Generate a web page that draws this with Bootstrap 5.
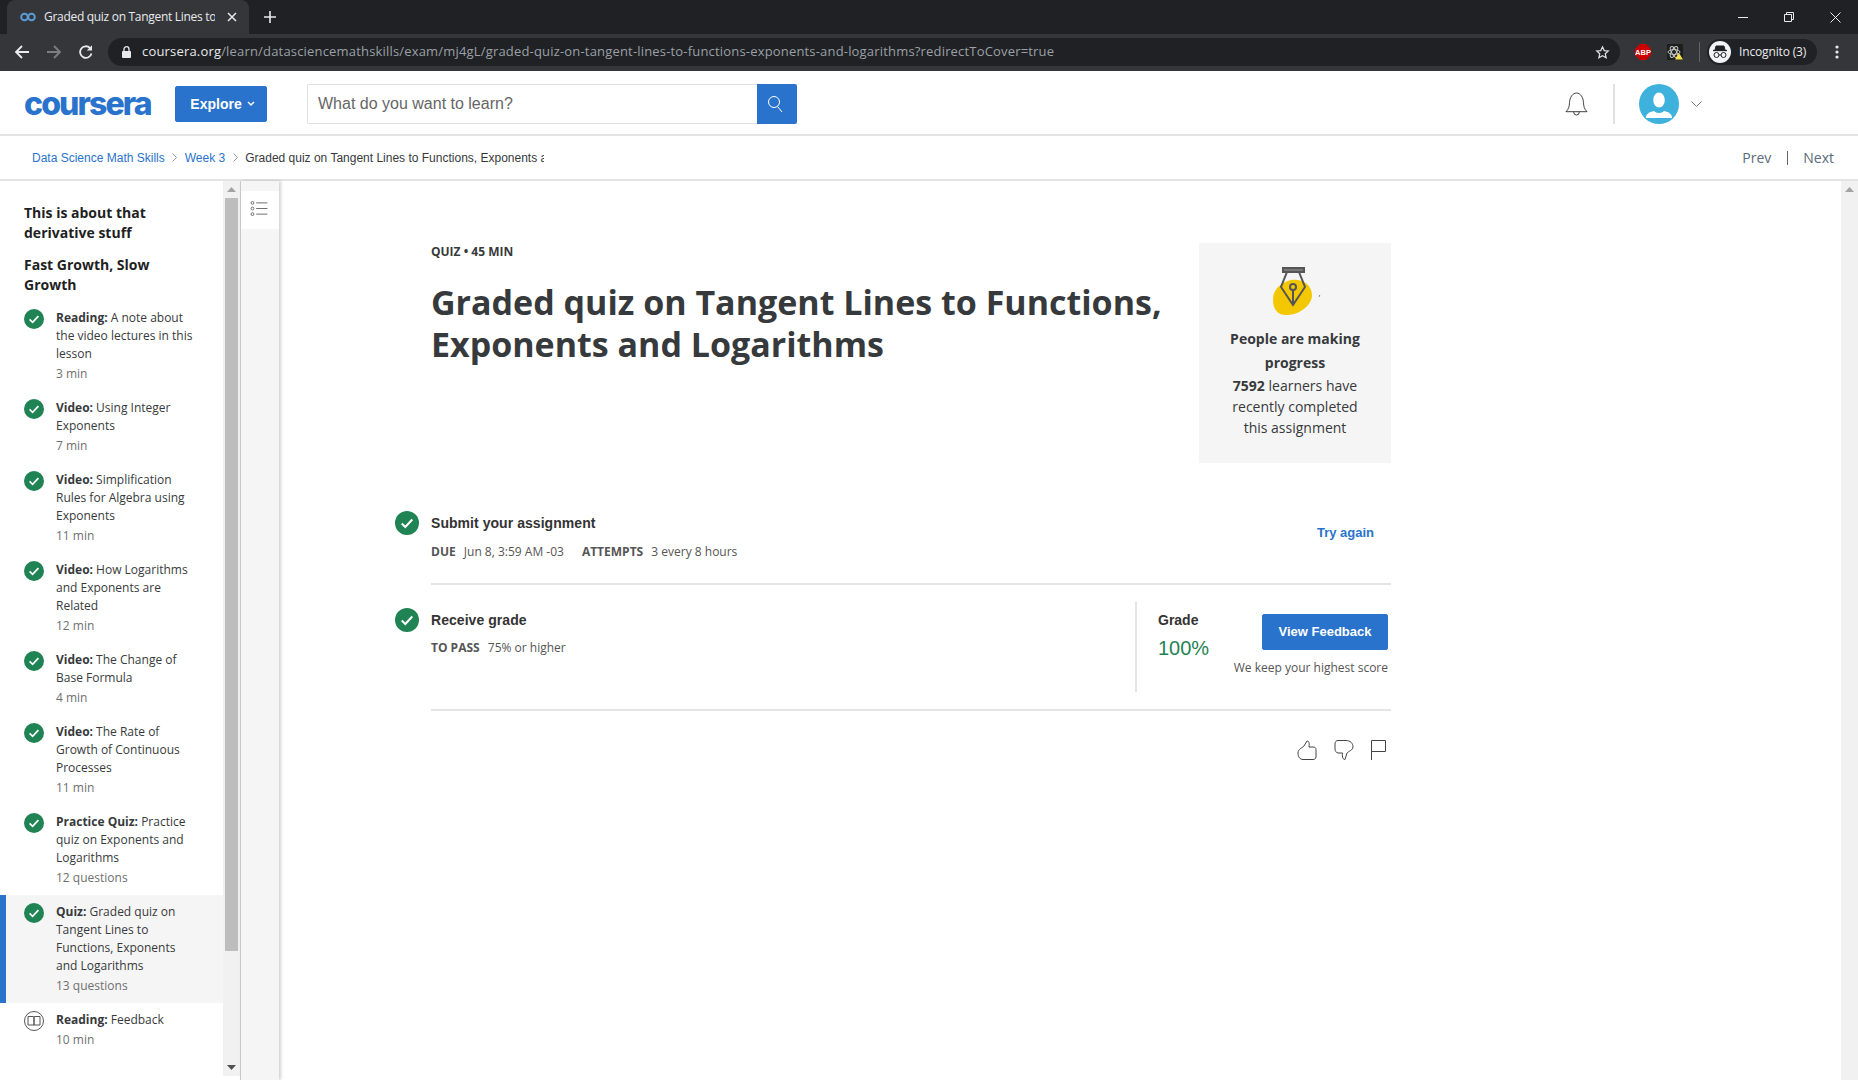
<!doctype html>
<html lang="en">
<head>
<meta charset="utf-8">
<title>Graded quiz on Tangent Lines to Functions</title>
<link href="https://cdn.jsdelivr.net/npm/bootstrap@5.3.0/dist/css/bootstrap.min.css" rel="stylesheet">
<style>
html,body{height:1080px;overflow:hidden;background:#fff}
body{font-family:"Open Sans",sans-serif;color:#373a3c;font-size:14px}
/* browser chrome */
.tabstrip{height:34px;background:#202124;color:#e8eaed}
.tabshape{width:242px;margin-left:7px;height:34px;background:#35363a;border-radius:8px 8px 0 0;padding:0 12px 0 13px;font-size:12px;gap:8px}
.tabtitle{width:171px;overflow:hidden;white-space:nowrap;letter-spacing:-.3px}
.newtab{margin-left:14px}
.winctrl{margin-left:auto;gap:36px;padding-right:17px}
.toolbar{height:37px;background:#35363a;padding:4px 0 5px 14px;color:#e8eaed}
.navico{gap:16px;width:94px}
.omni{height:28px;width:1512px;background:#202124;border-radius:14px;padding:0 10px 0 14px;font-size:13px;gap:11px}
.omni-url{color:#9aa0a6;white-space:nowrap;letter-spacing:.18px;flex:1}
.omni-url b{font-weight:400;color:#e8eaed}
.ext-row{margin-left:15px;gap:16px}
.divv{width:1px;height:20px;background:#5f6368}
.incog{width:110px;height:26px;border-radius:13px;background:#202124;padding-left:2px;gap:8px;font-size:12px;margin-left:-9px;letter-spacing:-.15px}
.incog-face{width:22px;height:22px;background:#f1f3f4;border-radius:50%}
.menudots{margin-left:2px}
/* site header */
.sitehead{height:65px;border-bottom:2px solid #e4e4e4;padding:3px 0 0 24px}
.wordmark{width:127px;font-family:Inter,sans-serif;font-weight:800;font-size:32px;line-height:36px;color:#2a73cc;letter-spacing:-1.9px;margin-right:24px;white-space:nowrap}
.btn-explore{--bs-btn-bg:#2a73cc;--bs-btn-border-color:#2a73cc;--bs-btn-hover-bg:#2a73cc;--bs-btn-color:#fff;--bs-btn-border-radius:2px;width:92px;height:36px;font-family:"Liberation Sans",sans-serif;font-weight:700;font-size:14px;padding:0 0 0 3px;gap:5px}
.searchgrp{width:490px;height:40px;margin-left:40px}
.searchgrp .form-control{border:1px solid #e1e1e1;border-right:0;border-radius:2px 0 0 2px;font-family:"Liberation Sans",sans-serif;font-size:16px;padding:0 10px;color:#333}
.searchgrp .form-control::placeholder{color:#666}
.searchbtn{width:40px;background:#2a73cc;border-radius:0 2px 2px 0;padding:0 4px 0 0}
.head-right{margin-left:auto;padding-right:156px}
.head-sep{width:2px;height:40px;background:#e1e1e1;margin:0 24px 0 25px}
.avatar{width:40px;height:40px;border-radius:50%;background:#3eb1dd}
.avatar-caret{margin-left:12px}
/* breadcrumb */
.crumbbar{height:45px;border-bottom:2px solid #e4e4e4;padding:0 24px 0 32px;font-family:"Liberation Sans",sans-serif;font-size:12px}
.crumbbar .breadcrumb{--bs-breadcrumb-margin-bottom:0;--bs-breadcrumb-item-padding-x:0;flex-wrap:nowrap}
.crumbbar a{color:#2a73cc;text-decoration:none}
.crumb-cur{width:299px;overflow:hidden;white-space:nowrap;color:#373a3c}
.crumb-sep{margin:0 7.5px;display:flex;align-items:center}
.prevnext{font-family:"Open Sans",sans-serif;font-size:14px;color:#5b6b7b;gap:15px}
.prevnext span:first-child{margin-right:1px}
.prevnext i{display:block;width:1px;height:14px;background:#666}
/* body */
.workspace{height:899px}
.sidebar{width:223px;height:899px;overflow:hidden;padding-top:22px}
.side-head{font-weight:700;font-size:14px;line-height:20px;color:#1f1f1f;padding:0 30px 0 24px;margin-bottom:12px}
.side-head.last{margin-bottom:6px}
.side-item{display:flex;padding:8px 28px 8px 24px;font-size:12px;line-height:18px}
.side-item.active-it{background:#f5f5f5;border-left:6px solid #2a73cc;padding-left:18px}
.side-item svg{flex:none;margin-right:12px}
.side-time{color:#6f6f6f;margin-top:2px}
.side-item b{font-weight:700}
.fakebar{width:17px;background:#f1f1f1;height:895px;display:flex;flex-direction:column;align-items:center}
.fakebar-arrow{height:17px;display:flex;align-items:center;justify-content:center;flex:none}
.fakebar-thumb{width:13px;height:753px;background:#bdbdbd;flex:none}
.rail{width:39px;background:#f5f5f5;border-left:1px solid #c8c8c8;box-shadow:2px 0 3px rgba(0,0,0,.18);padding-top:10px;flex:none}
.rail-tile{height:38px;background:#fff;padding:0 3px 4px 0}
.mainpane{flex:1;padding:61px 0 0 152px;min-width:0}
.mainbox{width:960px}
.eyebrow{font-size:12px;font-weight:700;line-height:20px;margin-bottom:19px}
.quiztitle{font-size:34px;font-weight:700;line-height:42px;margin:0;color:#373a3c;width:745px}
.progress-panel{width:192px;height:220px;background:#f5f5f5;text-align:center;padding-top:24px;margin-top:1px}
.panel-head{font-weight:700;line-height:24px;font-size:14px;margin-top:10px;padding:0 10px}
.panel-body{line-height:21px;padding:0 20px}
.steps{margin-top:20px}
.step-row{display:flex;border-bottom:2px solid #e4e4e4}
.step-ico{flex:none;width:24px;height:24px;margin-left:-36px;margin-right:12px}
.step-title{font-family:"Liberation Sans",sans-serif;font-weight:700;font-size:14px;letter-spacing:.05px;line-height:20px;color:#333}
.step-meta{font-size:12px;line-height:18px;color:#555;margin-top:10px;gap:18px}
.step-meta b{font-weight:700;margin-right:5px}
.step-one{height:102px;padding-top:30px}
.step-one .step-ico{margin-top:-2px}
.step-two{height:126px;padding-top:17px}
.step-two .step-ico{margin-top:6px}
.step-two .textcol{padding-top:8px}
.step-two .step-meta{margin-top:9px}
.tryagain{margin-left:auto;font-family:"Liberation Sans",sans-serif;font-weight:700;font-size:13px;color:#2a73cc;text-decoration:none;line-height:20px;margin-right:17px;align-self:flex-start;padding-top:10px;box-sizing:content-box}
.gradecol{margin-left:auto;width:256px;height:90px;border-left:2px solid #e4e4e4;padding-left:21px;display:flex;justify-content:space-between;padding-right:3px}
.grade-k{font-family:"Liberation Sans",sans-serif;font-weight:700;font-size:14px;line-height:20px;color:#333;margin-top:8px}
.grade-v{font-family:"Liberation Sans",sans-serif;font-size:20px;line-height:28px;color:#1f8354;margin-top:4px}
.btn-fb{--bs-btn-bg:#2a73cc;--bs-btn-border-color:#2a73cc;--bs-btn-hover-bg:#2a73cc;--bs-btn-color:#fff;--bs-btn-border-radius:2px;width:126px;height:36px;padding:0;font-family:"Liberation Sans",sans-serif;font-weight:700;font-size:13px;display:block;margin:12px 0 0 auto}
.score-note{font-size:12px;line-height:18px;color:#555;margin-top:9px;text-align:right;white-space:nowrap}
.feedback{gap:17px;justify-content:flex-end;padding:29px 5px 0 0}
.fakebar-main{height:899px}
</style>
</head>
<body>
<svg width="0" height="0" class="d-block" aria-hidden="true">
<symbol id="okc" viewBox="0 0 20 20"><circle cx="10" cy="10" r="10" fill="#1f8354"/><path d="M5.6 10.4l3 2.9 5.800-6.200" fill="none" stroke="#fff" stroke-width="1.7"/></symbol>
</svg>

<div class="tabstrip d-flex align-items-end">
  <div class="tabshape d-flex align-items-center">
    <svg width="16" height="10" viewBox="0 0 16 10" fill="none" stroke="#5b9bd5" stroke-width="2"><circle cx="4.5" cy="5" r="3.3"/><circle cx="11.5" cy="5" r="3.3"/></svg>
    <div class="tabtitle">Graded quiz on Tangent Lines to</div>
    <svg width="10" height="10" viewBox="0 0 10 10" stroke="#e8eaed" stroke-width="1.5" class="ms-auto"><path d="M1 1l8 8M9 1l-8 8"/></svg>
  </div>
  <svg class="newtab align-self-center" width="14" height="14" viewBox="0 0 14 14" stroke="#e8eaed" stroke-width="1.6"><path d="M7 1v12M1 7h12"/></svg>
  <div class="winctrl d-flex align-items-center align-self-center">
    <svg width="10" height="10" viewBox="0 0 10 10" stroke="#e8eaed"><path d="M0 5.5h10"/></svg>
    <svg width="10" height="10" viewBox="0 0 10 10" fill="none" stroke="#e8eaed"><path d="M.5 2.5h7v7h-7zM2.5 2.5V.5h7v7h-2"/></svg>
    <svg width="11" height="11" viewBox="0 0 11 11" stroke="#e8eaed"><path d="M.5.5l10 10M10.500.5l-10 10"/></svg>
  </div>
</div>

<div class="toolbar d-flex align-items-center">
  <div class="navico d-flex align-items-center">
    <svg width="16" height="16" viewBox="0 0 16 16" fill="none" stroke="#e8eaed" stroke-width="1.8"><path d="M15 8H2M8 2L2 8l6 6"/></svg>
    <svg width="16" height="16" viewBox="0 0 16 16" fill="none" stroke="#7b7e83" stroke-width="1.8"><path d="M1 8h13M8 2l6 6-6 6"/></svg>
    <svg width="16" height="16" viewBox="0 0 16 16" fill="none" stroke="#e8eaed" stroke-width="1.8"><path d="M13.500 9.500A5.800 5.800 0 1 1 12 4"/><path d="M14 1.200v5.200H8.800z" fill="#e8eaed" stroke="none"/></svg>
  </div>
  <div class="omni d-flex align-items-center">
    <svg width="9" height="12" viewBox="0 0 9 12"><rect y="5" width="9" height="7" rx="1" fill="#e8eaed"/><path d="M2 5V3.200a2.500 2.500 0 0 1 5 0V5" fill="none" stroke="#e8eaed" stroke-width="1.300"/></svg>
    <div class="omni-url"><b>coursera.org</b>/learn/datasciencemathskills/exam/mj4gL/graded-quiz-on-tangent-lines-to-functions-exponents-and-logarithms?redirectToCover=true</div>
    <svg width="15" height="15" viewBox="0 0 24 24" fill="none" stroke="#dadce0" stroke-width="2"><path d="M12 3l2.800 6 6.400.7-4.800 4.300 1.400 6.500L12 17.200 6.200 20.500 7.600 14 2.800 9.700l6.400-.7z"/></svg>
  </div>
  <div class="ext-row d-flex align-items-center">
    <svg width="16" height="16" viewBox="0 0 16 16"><path d="M5 0h6l5 5v6l-5 5H5l-5-5V5z" fill="#c00"/><text x="8" y="11" text-anchor="middle" font-family="Liberation Sans" font-weight="700" font-size="7.500" fill="#fff">ABP</text></svg>
    <svg width="16" height="16" viewBox="0 0 16 16" fill="none"><rect width="16" height="16" fill="#1e1e1e"/><g stroke="#c8c8c8"><ellipse cx="7" cy="8" rx="6" ry="2.400"/><ellipse cx="7" cy="8" rx="6" ry="2.400" transform="rotate(60 7 8)"/><ellipse cx="7" cy="8" rx="6" ry="2.400" transform="rotate(120 7 8)"/></g><path d="M12 9l4 6.500H8z" fill="#f4e04d"/></svg>
    <span class="divv"></span>
    <div class="incog d-flex align-items-center">
      <span class="incog-face d-flex align-items-center justify-content-center">
        <svg width="16" height="14" viewBox="0 0 16 14" fill="none" stroke="#202124"><path d="M4 1h8l1 4H3z" fill="#202124"/><path d="M1 5.500h14" stroke-width="1.300"/><circle cx="4.500" cy="10" r="2.500"/><circle cx="11.500" cy="10" r="2.500"/><path d="M7 10h2"/></svg>
      </span>
      <span>Incognito (3)</span>
    </div>
    <svg class="menudots" width="4" height="14" viewBox="0 0 4 14" fill="#e8eaed"><circle cx="2" cy="2" r="1.600"/><circle cx="2" cy="7" r="1.600"/><circle cx="2" cy="12" r="1.600"/></svg>
  </div>
</div>

<header class="sitehead d-flex align-items-center bg-white">
  <div class="wordmark">coursera</div>
  <button class="btn btn-explore d-flex align-items-center justify-content-center" type="button">Explore
    <svg width="8" height="6" viewBox="0 0 8 6" fill="none" stroke="#fff" stroke-width="1.500"><path d="M1 1l3 3 3-3"/></svg>
  </button>
  <div class="input-group searchgrp flex-nowrap">
    <input class="form-control" type="text" placeholder="What do you want to learn?" aria-label="Search">
    <button class="btn searchbtn d-flex align-items-center justify-content-center" type="button" aria-label="Search">
      <svg width="16" height="18" viewBox="0 0 16 18" fill="none" stroke="#fff"><circle cx="7" cy="7" r="5.500"/><path d="M10.500 11.500L15 17"/></svg>
    </button>
  </div>
  <div class="head-right d-flex align-items-center ms-auto">
    <svg width="23" height="25" viewBox="0 0 24 26" fill="none" stroke="#3a3a3a"><path d="M1 20.500h22c-3-3-3.500-5.500-3.700-9.500C19 5.500 16 1 12 1S5 5.500 4.700 11C4.500 15 4 17.500 1 20.500z"/><path d="M9 20.500a3 3.500 0 0 0 6 0"/></svg>
    <span class="head-sep"></span>
    <div class="avatar d-flex align-items-end justify-content-center overflow-hidden">
      <svg width="26" height="33" viewBox="0 0 26 33" fill="#fff"><ellipse cx="13" cy="9" rx="5.800" ry="7.500"/><path d="M0 27c0-4 3-6 8-7 1 1 3 2 5 2s4-1 5-2c5 1 8 3 8 7z"/></svg>
    </div>
    <svg class="avatar-caret" width="11" height="6" viewBox="0 0 11 6" fill="none" stroke="#777"><path d="M.5.500l5 5 5-5"/></svg>
  </div>
</header>

<div class="crumbbar d-flex align-items-center justify-content-between bg-white">
  <nav aria-label="breadcrumb">
    <ol class="breadcrumb align-items-center">
      <li><a href="#">Data Science Math Skills</a></li>
      <li class="crumb-sep"><svg width="5" height="9" viewBox="0 0 5 9" fill="none" stroke="#999"><path d="M.5.500l4 4-4 4"/></svg></li>
      <li><a href="#">Week 3</a></li>
      <li class="crumb-sep"><svg width="5" height="9" viewBox="0 0 5 9" fill="none" stroke="#999"><path d="M.5.500l4 4-4 4"/></svg></li>
      <li class="crumb-cur">Graded quiz on Tangent Lines to Functions, Exponents and Logarithms</li>
    </ol>
  </nav>
  <div class="prevnext d-flex align-items-center"><span>Prev</span><i></i><span>Next</span></div>
</div>

<div class="workspace d-flex">
  <aside class="sidebar flex-none">
    <div class="side-head">This is about that derivative stuff</div>
    <div class="side-head last">Fast Growth, Slow Growth</div>
    <div class="side-item"><svg width="20" height="20"><use href="#okc"/></svg><div><div><b>Reading:</b> A note about the video lectures in this lesson</div><div class="side-time">3 min</div></div></div>
    <div class="side-item"><svg width="20" height="20"><use href="#okc"/></svg><div><div><b>Video:</b> Using Integer Exponents</div><div class="side-time">7 min</div></div></div>
    <div class="side-item"><svg width="20" height="20"><use href="#okc"/></svg><div><div><b>Video:</b> Simplification Rules for Algebra using Exponents</div><div class="side-time">11 min</div></div></div>
    <div class="side-item"><svg width="20" height="20"><use href="#okc"/></svg><div><div><b>Video:</b> How Logarithms and Exponents are Related</div><div class="side-time">12 min</div></div></div>
    <div class="side-item"><svg width="20" height="20"><use href="#okc"/></svg><div><div><b>Video:</b> The Change of Base Formula</div><div class="side-time">4 min</div></div></div>
    <div class="side-item"><svg width="20" height="20"><use href="#okc"/></svg><div><div><b>Video:</b> The Rate of Growth of Continuous Processes</div><div class="side-time">11 min</div></div></div>
    <div class="side-item"><svg width="20" height="20"><use href="#okc"/></svg><div><div><b>Practice Quiz:</b> Practice quiz on Exponents and Logarithms</div><div class="side-time">12 questions</div></div></div>
    <div class="side-item active-it"><svg width="20" height="20"><use href="#okc"/></svg><div><div><b>Quiz:</b> Graded quiz on Tangent Lines to Functions, Exponents and Logarithms</div><div class="side-time">13 questions</div></div></div>
    <div class="side-item"><svg width="20" height="20" viewBox="0 0 20 20" fill="none" stroke="#555"><circle cx="10" cy="10" r="9.500"/><path d="M4 5.500h5.500a.5.500 0 0 1 .5.500v8H4zM16 5.500h-5.500a.5.500 0 0 0-.5.500v8h6z"/></svg><div><div><b>Reading:</b> Feedback</div><div class="side-time">10 min</div></div></div>
  </aside>
  <div class="fakebar flex-none">
    <div class="fakebar-arrow"><svg width="9" height="5" viewBox="0 0 9 5" fill="#a3a3a3"><path d="M4.500 0L9 5H0z"/></svg></div>
    <div class="fakebar-thumb"></div>
    <div class="fakebar-arrow mt-auto"><svg width="9" height="5" viewBox="0 0 9 5" fill="#505050"><path d="M4.500 5L9 0H0z"/></svg></div>
  </div>
  <div class="rail"><div class="rail-tile d-flex align-items-center justify-content-center">
    <svg width="18" height="15" viewBox="0 0 18 16" fill="none" stroke="#666"><circle cx="2" cy="2" r="1.500"/><circle cx="2" cy="8" r="1.500"/><circle cx="2" cy="14" r="1.500"/><path d="M6 2h12M6 8h12M6 14h12"/></svg>
  </div></div>

  <main class="mainpane">
    <div class="mainbox">
      <div class="d-flex justify-content-between align-items-start">
        <div>
          <div class="eyebrow">QUIZ &bull; 45 MIN</div>
          <h1 class="quiztitle">Graded quiz on Tangent Lines to Functions, Exponents and Logarithms</h1>
        </div>
        <section class="progress-panel">
          <svg width="64" height="50" viewBox="0 0 64 50" class="d-block mx-auto"><path d="M10 32c0-10 9-17 18-19 11-2 21 5 21 15 0 10-12 20-26 20-9 0-13-6-13-16z" fill="#f4c800"/><g fill="none" stroke="#555" stroke-width="2"><path d="M20 1h21v4H20z" fill="#777"/><path d="M24 5l-6 15 12 18 12-18-6-15"/><circle cx="30" cy="20" r="3"/><path d="M30 23v15"/></g><path d="M56 28l.8.8-.8 1" fill="none" stroke="#777"/></svg>
          <div class="panel-head">People are making progress</div>
          <div class="panel-body"><b>7592</b> learners have recently completed this assignment</div>
        </section>
      </div>
      <div class="steps">
        <div class="step-row step-one">
          <svg class="step-ico" viewBox="0 0 20 20"><use href="#okc"/></svg>
          <div class="textcol">
            <div class="step-title">Submit your assignment</div>
            <div class="step-meta d-flex"><span><b>DUE</b> Jun 8, 3:59 AM -03</span><span><b>ATTEMPTS</b> 3 every 8 hours</span></div>
          </div>
          <a href="#" class="tryagain">Try again</a>
        </div>
        <div class="step-row step-two">
          <svg class="step-ico" viewBox="0 0 20 20"><use href="#okc"/></svg>
          <div class="textcol">
            <div class="step-title">Receive grade</div>
            <div class="step-meta d-flex"><span><b>TO PASS</b> 75% or higher</span></div>
          </div>
          <div class="gradecol">
            <div><div class="grade-k">Grade</div><div class="grade-v">100%</div></div>
            <div><button type="button" class="btn btn-fb">View Feedback</button><div class="score-note">We keep your highest score</div></div>
          </div>
        </div>
        <div class="feedback d-flex">
          <svg width="20" height="20" viewBox="0 0 20 20" fill="none" stroke="#444"><path d="M1 13C1 9 5 8 7 6l3-5c2 0 2.500 2 2 6h4c3 0 3 2 3 3v7c0 2-2 2.500-3 2.500H6C3 19.500 1 17 1 13z"/></svg>
          <svg width="20" height="20" viewBox="0 0 20 20" fill="none" stroke="#444"><path d="M4 .5h8c4 0 7 2.500 7 6.500 0 3-4 4-6 6l-2 6.500c-2 0-3-2-2.500-6.500H4C2 12.500 1 11 1 9V4C1 2 2 .5 4 .5z"/></svg>
          <svg width="15" height="20" viewBox="0 0 15 20" fill="none" stroke="#444"><path d="M.5 20V.5h14v11H.5"/></svg>
        </div>
      </div>
    </div>
  </main>
  <div class="fakebar fakebar-main flex-none ms-auto"><div class="fakebar-arrow"><svg width="9" height="5" viewBox="0 0 9 5" fill="#a3a3a3"><path d="M4.500 0L9 5H0z"/></svg></div></div>
</div>
<script src="https://cdn.jsdelivr.net/npm/bootstrap@5.3.0/dist/js/bootstrap.bundle.min.js"></script>
</body>
</html>
